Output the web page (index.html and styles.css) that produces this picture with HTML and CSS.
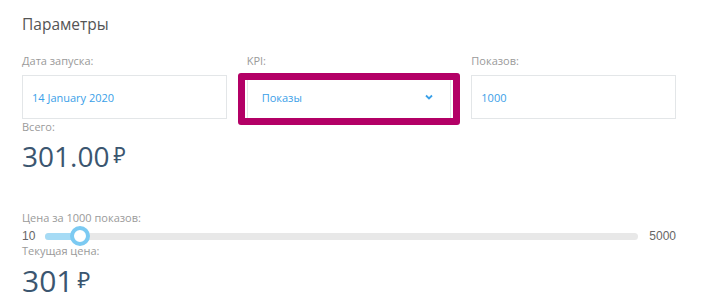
FILE: index.html
```html
<!DOCTYPE html>
<html lang="ru">
<head>
<meta charset="utf-8">
<link rel="stylesheet" href="styles.css">
</head>
<body>
<div class="panel">
	<h2 class="title">Параметры</h2>

	<div class="fields">
		<div class="field">
			<div class="label">Дата запуска:</div>
			<div class="box">14 January 2020</div>
		</div>
		<div class="field kpi">
			<div class="label">KPI:</div>
			<div class="box select">
				<span>Показы</span>
				<svg class="chev" width="8" height="6" viewBox="0 0 8 6"><path d="M1 1.5 L4 4.5 L7 1.5" fill="none" stroke="#3aa0e8" stroke-width="1.8"/></svg>
			</div>
			<div class="mark"></div>
		</div>
		<div class="field">
			<div class="label">Показов:</div>
			<div class="box">1000</div>
		</div>
	</div>

	<div class="label">Всего:</div>
	<div class="sum">301.00<span class="rub">₽</span></div>

	<div class="label price">Цена за 1000 показов:</div>
	<div class="range">
		<span class="lim">10</span>
		<div class="track">
			<div class="fill" style="width:35px"></div>
			<div class="thumb" style="left:35px"></div>
		</div>
		<span class="lim">5000</span>
	</div>

	<div class="label">Текущая цена:</div>
	<div class="sum now">301<span class="rub">₽</span></div>
</div>
</body>
</html>
```

FILE: styles.css
```css
body { margin:0; background:#fff; font-family:"Open Sans", "Noto Sans", sans-serif; }

.panel { padding:12px 49px 0 22px; }

.title { margin:0 0 17px; font-size:15.5px; font-weight:400; color:#555; line-height:24px; }

.label { font-size:11px; color:#9a9a9a; line-height:16px; }

.fields { display:grid; grid-template-columns:repeat(3, 1fr); gap:20px; }
.field { position:relative; }
.field .label { margin-bottom:6px; }

.box { height:44px; box-sizing:border-box; border:1px solid #e3e6e8; padding:0 9px; display:flex; align-items:center; font-size:11px; color:#3aa0e8; }
.select { justify-content:space-between; padding:0 17px 0 14px; }
.chev { display:block; }

.mark { position:absolute; left:-9px; top:20px; width:222px; height:52px; box-sizing:border-box; border:7px solid #b30066; border-radius:3px; }

.sum { font-size:28px; color:#3b5670; line-height:36px; margin:2px 0 0; }
.sum .rub { font-size:21px; margin-left:4px; vertical-align:4px; }

.price { margin:36px 0 3px; }

.range { display:flex; align-items:center; gap:10px; height:14px; font-family:"Liberation Sans", Arial, sans-serif; }
.lim { font-size:12px; color:#666; }
.track { flex:1; height:7px; border-radius:4px; background:#e8e8e8; position:relative; margin-right:1px; }
.fill { position:absolute; left:0; top:0; bottom:0; background:#a6dbf5; border-radius:4px; }
.thumb { position:absolute; top:50%; width:20px; height:20px; margin:-10px 0 0 -10px; box-sizing:border-box; border:4px solid #7ccaf2; background:#fff; border-radius:50%; }

.now { font-size:30px; margin-top:2px; }
.now .rub { font-size:22px; }
```
